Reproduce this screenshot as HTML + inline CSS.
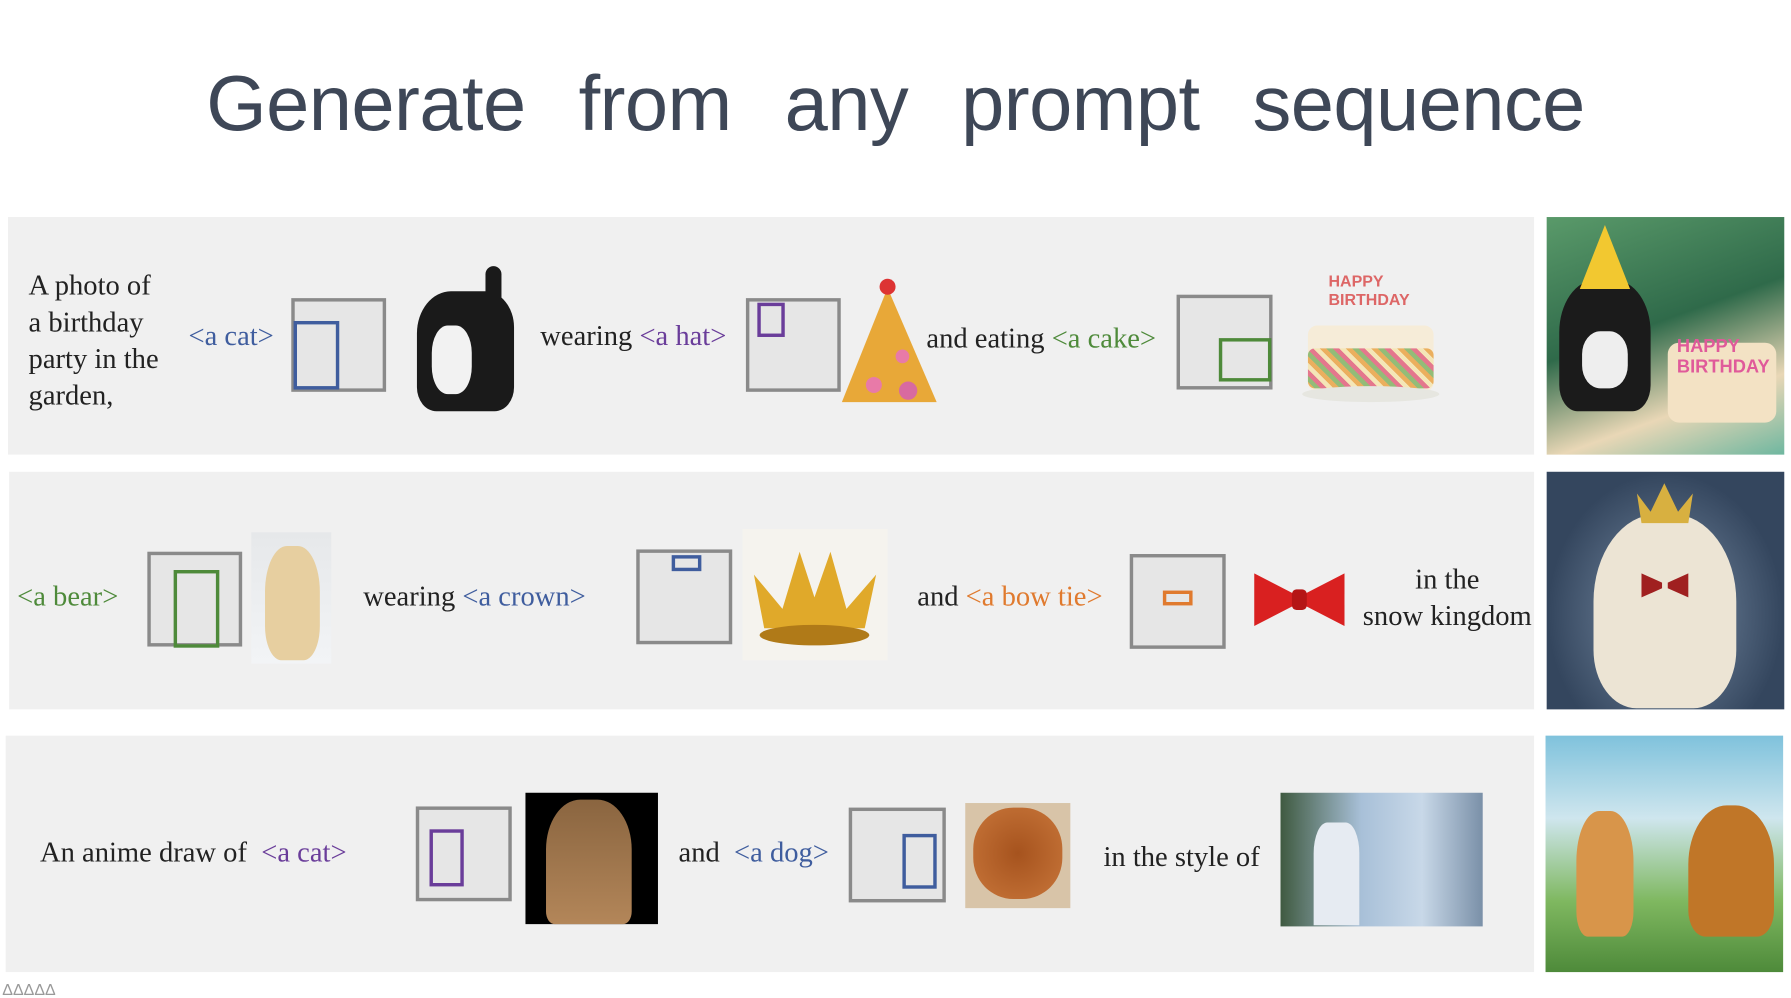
<!DOCTYPE html>
<html><head><meta charset="utf-8"><style>
html,body{margin:0;padding:0;background:#fff;width:1791px;height:994px;overflow:hidden}
#w{position:absolute;left:0;top:0;width:1568px;height:870px;transform:scale(1.1423);transform-origin:0 0}
.a{position:absolute}
.t{position:absolute;font-family:"Liberation Serif",serif;font-size:25px;color:#222;white-space:nowrap;line-height:32px}
.row{position:absolute;background:#f0f0f0}
.box{position:absolute;background:#e6e6e6;border:3px solid #8a8a8a;box-sizing:border-box}
.in{position:absolute;border:3px solid;box-sizing:border-box}
.bl{color:#3f5d9e}.pu{color:#6a3d9a}.gr{color:#4e8a3a}.or{color:#e07a2e}
</style></head><body><div id="w">
<div class="a" style="left:0;top:52px;width:1568px;text-align:center;font-family:'Liberation Sans',sans-serif;font-size:68px;color:#3e4757;word-spacing:28px;letter-spacing:-0.5px">Generate from any prompt sequence</div>

<!-- row1 -->
<div class="row" style="left:7px;top:190px;width:1336px;height:208px"></div>
<div class="t" style="left:25px;top:235px">A photo of<br>a birthday<br>party in the<br>garden,</div>
<div class="t bl" style="left:165px;top:279px">&lt;a cat&gt;</div>
<div class="box" style="left:255px;top:261px;width:83px;height:82px"><div class="in" style="border-color:#3f5d9e;left:-1px;top:17px;width:40px;height:60px"></div></div>
<div class="a" style="left:365px;top:255px;width:85px;height:105px;background:#1a1a1a;border-radius:35% 30% 20% 20%"></div>
<div class="a" style="left:378px;top:285px;width:35px;height:60px;background:#f2f2f2;border-radius:40%"></div>
<div class="a" style="left:425px;top:233px;width:14px;height:60px;background:#1a1a1a;border-radius:8px"></div>
<div class="t" style="left:473px;top:279px">wearing <span class="pu">&lt;a hat&gt;</span></div>
<div class="box" style="left:653px;top:261px;width:83px;height:82px"><div class="in" style="border-color:#6a3d9a;left:7px;top:1px;width:24px;height:30px"></div></div>
<svg class="a" style="left:735px;top:242px" width="88" height="115"><polygon points="42,10 2,110 85,110" fill="#e8a838"/><circle cx="42" cy="9" r="7" fill="#d33"/><circle cx="55" cy="70" r="6" fill="#e87aa8"/><circle cx="30" cy="95" r="7" fill="#e87aa8"/><circle cx="60" cy="100" r="8" fill="#d86aa0"/></svg>
<div class="t" style="left:811px;top:281px">and eating <span class="gr">&lt;a cake&gt;</span></div>
<div class="box" style="left:1030px;top:258px;width:84px;height:83px"><div class="in" style="border-color:#4e8a3a;left:34px;top:35px;width:46px;height:38px"></div></div>
<div class="a" style="left:1145px;top:285px;width:110px;height:58px;background:#f6ecd8;border-radius:8px"></div>
<div class="a" style="left:1145px;top:305px;width:110px;height:35px;background:repeating-linear-gradient(45deg,#e8a040 0 4px,#7ab060 4px 8px,#e05a7a 8px 12px,#f4e4b0 12px 16px);border-radius:6px;opacity:.8"></div>
<div class="a" style="left:1140px;top:338px;width:120px;height:14px;background:#e6e6e0;border-radius:50%"></div>
<div class="a" style="left:1163px;top:238px;font:bold 14px 'Liberation Sans',sans-serif;color:#d66">HAPPY<br>BIRTHDAY</div>
<div class="a" style="left:1354px;top:190px;width:208px;height:208px;background:linear-gradient(160deg,#5a9a6a,#2f6a4a 45%,#e9d7b6 75%,#6fb7a0)"></div>
<div class="a" style="left:1365px;top:245px;width:80px;height:115px;background:#1b1b1b;border-radius:40% 40% 20% 20%"></div>
<div class="a" style="left:1385px;top:290px;width:40px;height:50px;background:#eee;border-radius:40%"></div>
<svg class="a" style="left:1380px;top:195px" width="50" height="60"><polygon points="25,2 3,58 47,58" fill="#f2c830"/></svg>
<div class="a" style="left:1460px;top:300px;width:95px;height:70px;background:#f3e2c4;border-radius:10px"></div>
<div class="a" style="left:1468px;top:295px;font:bold 16px 'Liberation Sans',sans-serif;color:#e05a9a">HAPPY<br>BIRTHDAY</div>

<!-- row2 -->
<div class="row" style="left:8px;top:413px;width:1335px;height:208px"></div>
<div class="t gr" style="left:15px;top:507px">&lt;a bear&gt;</div>
<div class="box" style="left:129px;top:483px;width:83px;height:83px"><div class="in" style="border-color:#4e8a3a;left:20px;top:13px;width:40px;height:68px"></div></div>
<div class="a" style="left:220px;top:466px;width:70px;height:115px;background:linear-gradient(#e6e8ea,#f2f4f6)"></div>
<div class="a" style="left:232px;top:478px;width:48px;height:100px;background:#e7cfa0;border-radius:40% 40% 30% 30%"></div>
<div class="t" style="left:318px;top:507px">wearing <span class="bl">&lt;a crown&gt;</span></div>
<div class="box" style="left:557px;top:481px;width:84px;height:83px"><div class="in" style="border-color:#3f5d9e;left:28px;top:2px;width:26px;height:14px"></div></div>
<div class="a" style="left:650px;top:463px;width:127px;height:115px;background:#f5f3ee"></div>
<svg class="a" style="left:655px;top:478px" width="116" height="90"><polygon points="5,25 30,55 45,5 58,45 72,5 86,55 112,25 102,72 14,72" fill="#e0a92a"/><ellipse cx="58" cy="78" rx="48" ry="9" fill="#b07a18"/></svg>
<div class="t" style="left:803px;top:507px">and <span class="or">&lt;a bow tie&gt;</span></div>
<div class="box" style="left:989px;top:485px;width:84px;height:83px"><div class="in" style="border-color:#e07a2e;left:26px;top:29px;width:26px;height:13px"></div></div>
<svg class="a" style="left:1095px;top:490px" width="85" height="70"><polygon points="3,12 38,30 38,40 3,58" fill="#d92020"/><polygon points="82,12 47,30 47,40 82,58" fill="#d92020"/><rect x="36" y="26" width="13" height="18" rx="4" fill="#b51515"/></svg>
<div class="t" style="left:1189px;top:492px;text-align:center;width:156px">in the<br>snow kingdom</div>
<div class="a" style="left:1354px;top:413px;width:208px;height:208px;background:radial-gradient(ellipse at 50% 60%,#7a8ea6,#34465e 70%)"></div>
<div class="a" style="left:1395px;top:450px;width:125px;height:170px;background:#ece4d4;border-radius:45% 45% 30% 30%"></div>
<svg class="a" style="left:1430px;top:420px" width="55" height="40"><polygon points="3,12 15,28 27,3 39,28 52,12 48,38 7,38" fill="#d8b040"/></svg>
<svg class="a" style="left:1435px;top:500px" width="45" height="25"><polygon points="2,2 20,10 20,15 2,23" fill="#a02020"/><polygon points="43,2 25,10 25,15 43,23" fill="#a02020"/></svg>

<!-- row3 -->
<div class="row" style="left:5px;top:644px;width:1338px;height:207px"></div>
<div class="t" style="left:35px;top:731px">An anime draw of &nbsp;<span class="pu">&lt;a cat&gt;</span></div>
<div class="box" style="left:364px;top:706px;width:84px;height:83px"><div class="in" style="border-color:#6a3d9a;left:9px;top:17px;width:30px;height:50px"></div></div>
<div class="a" style="left:460px;top:694px;width:116px;height:115px;background:#000"></div>
<div class="a" style="left:478px;top:700px;width:75px;height:109px;background:linear-gradient(#8a6540,#b38659);border-radius:40% 40% 10% 10%"></div>
<div class="t" style="left:594px;top:731px">and &nbsp;<span class="bl">&lt;a dog&gt;</span></div>
<div class="box" style="left:743px;top:707px;width:85px;height:83px"><div class="in" style="border-color:#3f5d9e;left:44px;top:20px;width:30px;height:48px"></div></div>
<div class="a" style="left:845px;top:703px;width:92px;height:92px;background:#d8c4a8"></div>
<div class="a" style="left:852px;top:707px;width:78px;height:80px;background:radial-gradient(#a6531e,#c8763a);border-radius:45%"></div>
<div class="t" style="left:966px;top:735px">in the style of</div>
<div class="a" style="left:1121px;top:694px;width:177px;height:117px;background:linear-gradient(90deg,#3f5a40,#a8c0d8 40%,#c8d8e8 70%,#7a90a8)"></div>
<div class="a" style="left:1150px;top:720px;width:40px;height:90px;background:#e6ebf2;border-radius:30% 30% 0 0"></div>
<div class="a" style="left:1353px;top:644px;width:208px;height:207px;background:linear-gradient(#7fc2dc,#cfe6ee 35%,#7fb860 70%,#4e8a3a)"></div>
<div class="a" style="left:1380px;top:710px;width:50px;height:110px;background:#d8954a;border-radius:40% 40% 20% 20%"></div>
<div class="a" style="left:1478px;top:705px;width:75px;height:115px;background:#c07628;border-radius:45% 45% 20% 20%"></div>
<div class="a" style="left:2px;top:858px;font:14px 'Liberation Sans',sans-serif;color:#999">&#916;&#916;&#916;&#916;&#916;</div>
</div></body></html>
